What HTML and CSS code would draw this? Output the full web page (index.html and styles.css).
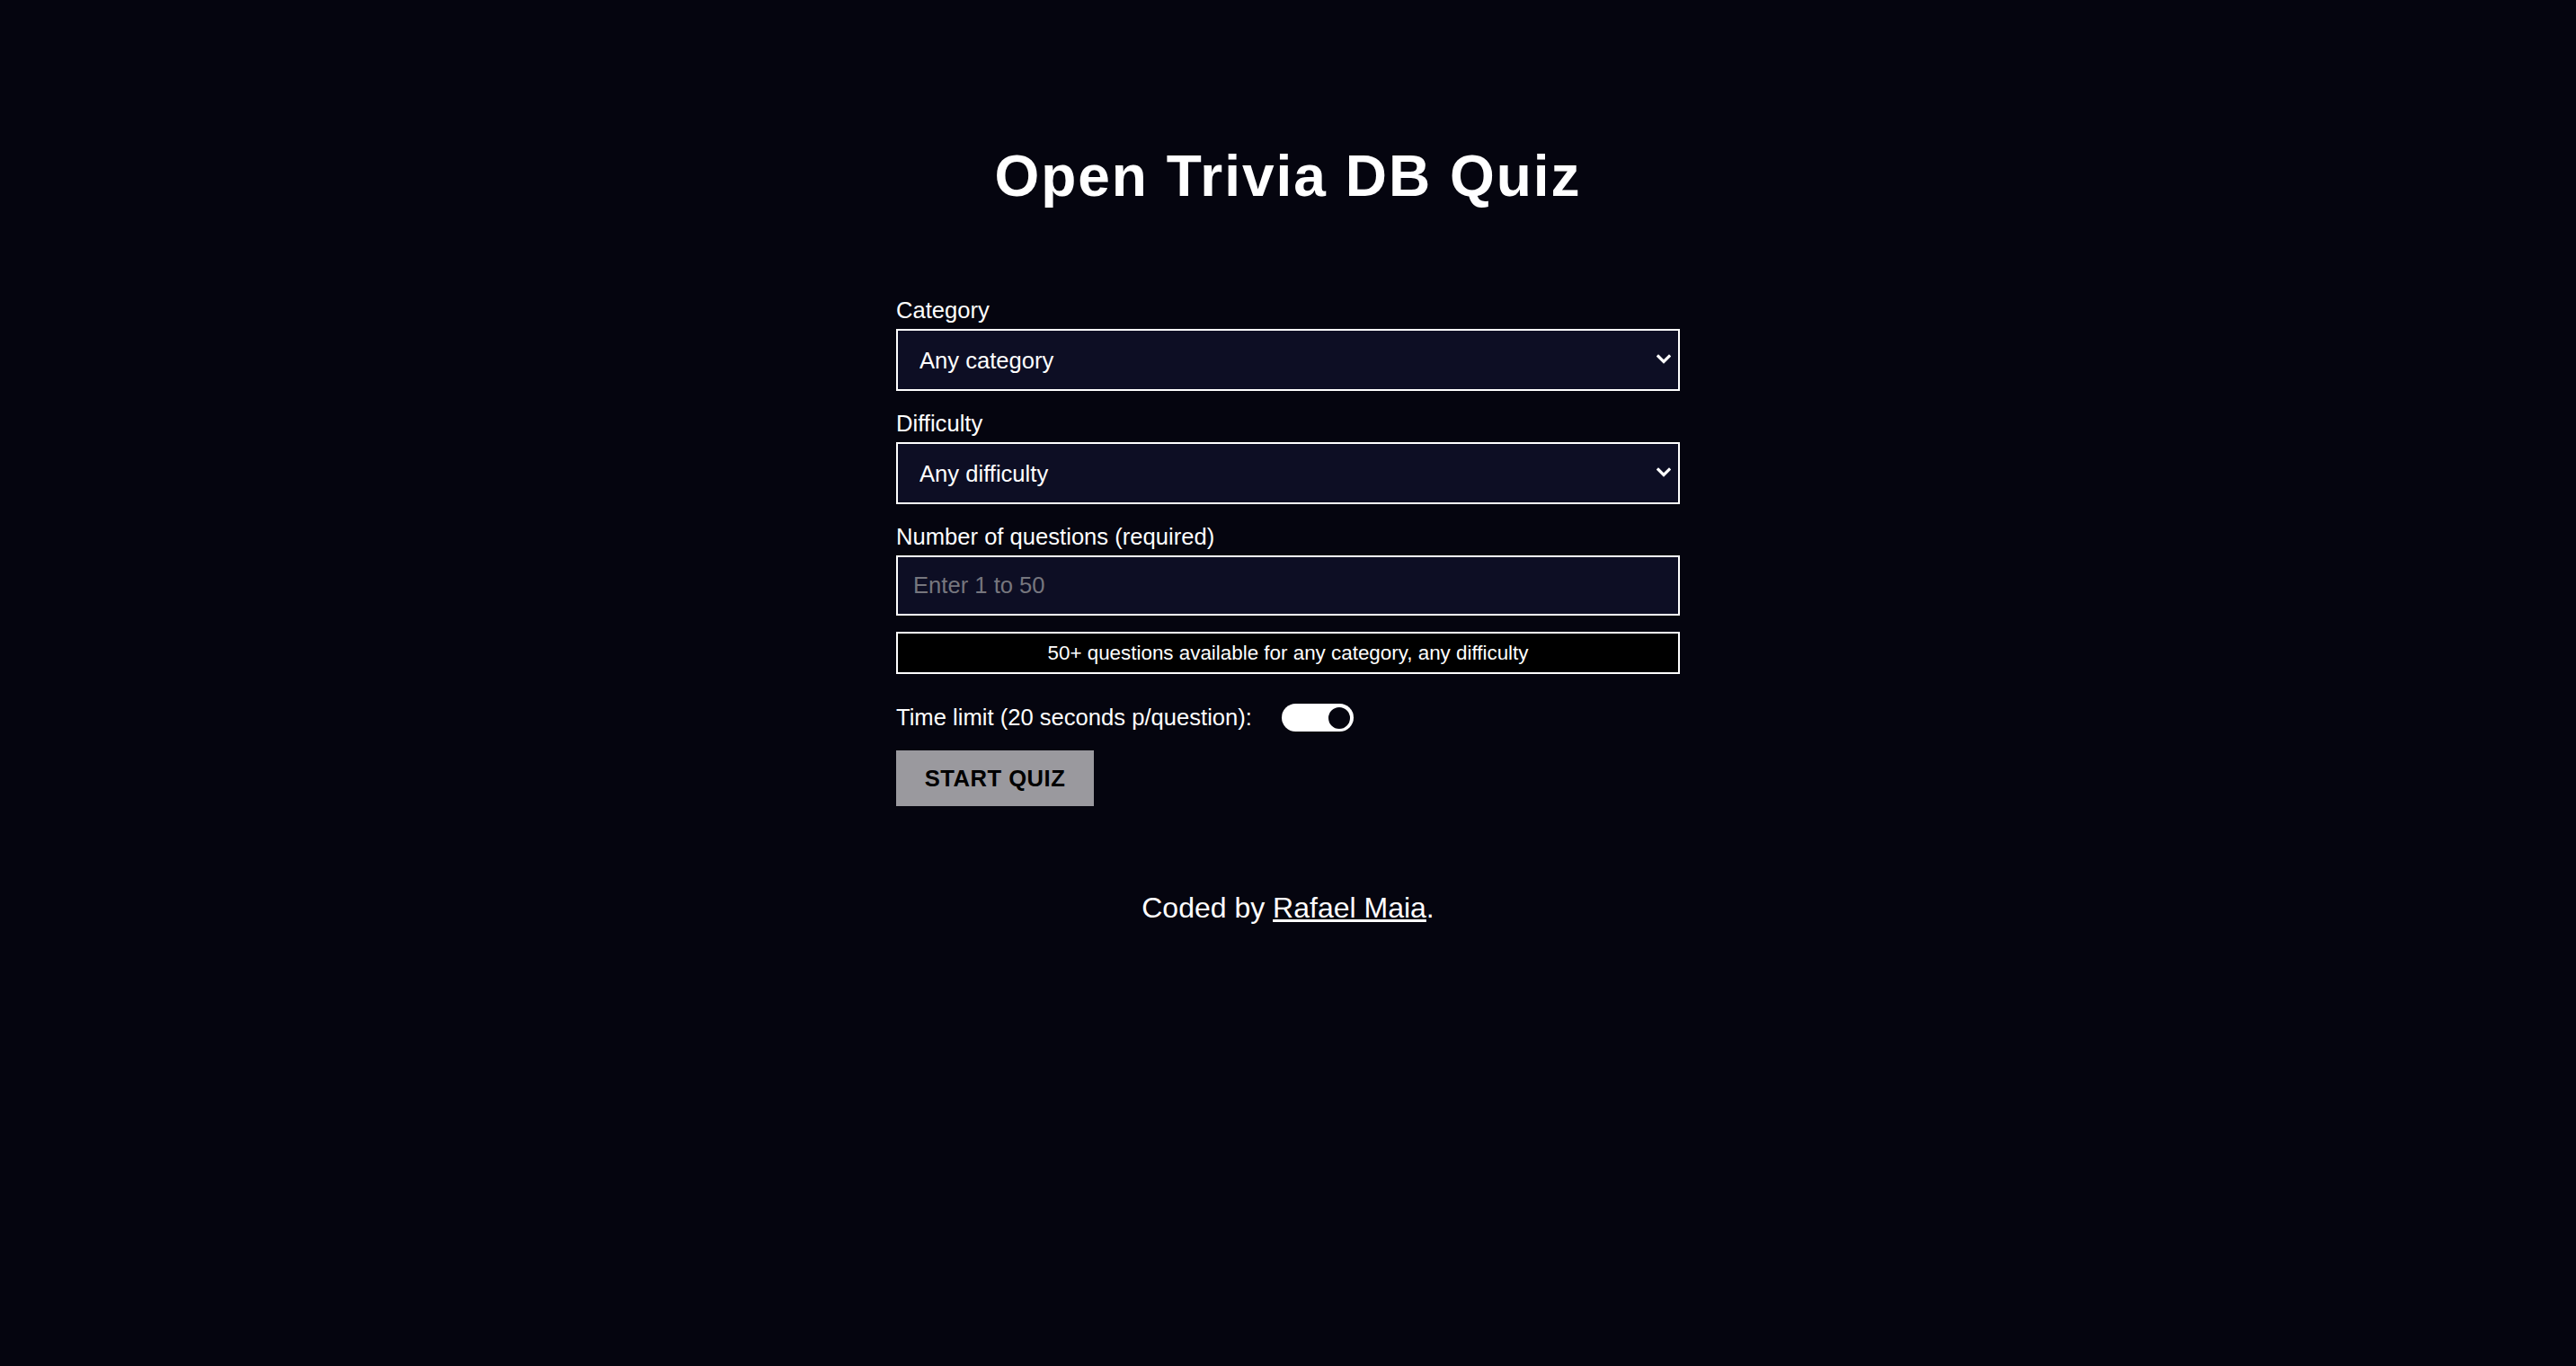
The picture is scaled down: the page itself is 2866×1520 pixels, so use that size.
FILE: index.html
```html
<!DOCTYPE html>
<html lang="en">
<head>
<meta charset="utf-8">
<title>Open Trivia DB Quiz</title>
<link rel="stylesheet" href="styles.css">
</head>
<body>
<main class="page">
  <h1 class="title">Open Trivia DB Quiz</h1>
  <form class="quiz-form">
    <label class="field-label" for="category">Category</label>
    <div class="select-wrap">
      <select id="category" class="field-select">
        <option>Any category</option>
      </select>
      <svg class="chevron" viewBox="0 0 16 12" width="16" height="12" aria-hidden="true"><path d="M2 2.5 L8 8.5 L14 2.5" fill="none" stroke="#ffffff" stroke-width="3.2" stroke-linecap="square"/></svg>
    </div>
    <label class="field-label" for="difficulty">Difficulty</label>
    <div class="select-wrap">
      <select id="difficulty" class="field-select">
        <option>Any difficulty</option>
      </select>
      <svg class="chevron" viewBox="0 0 16 12" width="16" height="12" aria-hidden="true"><path d="M2 2.5 L8 8.5 L14 2.5" fill="none" stroke="#ffffff" stroke-width="3.2" stroke-linecap="square"/></svg>
    </div>
    <label class="field-label" for="amount">Number of questions (required)</label>
    <input id="amount" class="field-input" type="text" placeholder="Enter 1 to 50">
    <div class="info-box">50+ questions available for any category, any difficulty</div>
    <div class="time-row">
      <span class="time-label">Time limit (20 seconds p/question):</span>
      <span class="toggle"><span class="knob"></span></span>
    </div>
    <button type="button" class="start-btn">START QUIZ</button>
  </form>
  <p class="footer">Coded by <a href="#" class="footer-link">Rafael Maia</a>.</p>
</main>
</body>
</html>
```

FILE: styles.css
```css
html, body {
  margin: 0;
  padding: 0;
}
body {
  background: #05050f;
  color: #ffffff;
  font-family: "Liberation Sans", Arial, sans-serif;
  min-height: 1520px;
}
.page {
  width: 872px;
  margin: 0 auto;
  padding-top: 159px;
}
.title {
  margin: 0;
  font-size: 64px;
  line-height: 74px;
  letter-spacing: 2px;
  font-weight: bold;
  text-align: center;
}
.quiz-form {
  margin-top: 98px;
  display: flex;
  flex-direction: column;
}
.field-label {
  display: block;
  font-size: 25.6px;
  line-height: 29px;
  margin-bottom: 6px;
}
.select-wrap {
  position: relative;
  margin-bottom: 22px;
}
.field-select {
  display: block;
  width: 100%;
  height: 69px;
  box-sizing: border-box;
  appearance: none;
  -webkit-appearance: none;
  border: 2px solid #ffffff;
  border-radius: 0;
  background: #0d0e24;
  color: #ffffff;
  font-family: "Liberation Sans", Arial, sans-serif;
  font-size: 25.6px;
  padding: 0 24px;
  outline: none;
}
.chevron {
  position: absolute;
  right: 10px;
  top: 28px;
  pointer-events: none;
}
.field-input {
  display: block;
  width: 100%;
  height: 67px;
  box-sizing: border-box;
  border: 2px solid #ffffff;
  border-radius: 0;
  background: #0d0e24;
  color: #ffffff;
  font-family: "Liberation Sans", Arial, sans-serif;
  font-size: 25.6px;
  padding: 0 17px;
  outline: none;
}
.field-input::placeholder {
  color: #76767e;
}
.info-box {
  margin-top: 18px;
  height: 47px;
  box-sizing: border-box;
  border: 2px solid #ffffff;
  background: #000000;
  font-size: 22.4px;
  display: flex;
  align-items: center;
  justify-content: center;
}
.time-row {
  display: flex;
  align-items: center;
  margin-top: 33px;
  height: 31px;
}
.time-label {
  font-size: 25.6px;
}
.toggle {
  margin-left: 33px;
  width: 80px;
  height: 31px;
  border-radius: 16px;
  background: #ffffff;
  display: flex;
  align-items: center;
  justify-content: flex-end;
  padding-right: 2px;
  box-sizing: border-box;
}
.knob {
  width: 24px;
  height: 24px;
  border-radius: 50%;
  background: #05050f;
  border: 2px solid #ffffff;
}
.start-btn {
  margin-top: 21px;
  width: 220px;
  height: 62px;
  border: none;
  border-radius: 0;
  background: #9a999e;
  color: #000000;
  font-family: "Liberation Sans", Arial, sans-serif;
  font-size: 25.6px;
  font-weight: bold;
  letter-spacing: 0.5px;
  padding: 0;
}
.footer {
  margin: 95px 0 0;
  text-align: center;
  font-size: 32px;
  line-height: 37px;
}
.footer-link {
  color: #ffffff;
  text-decoration: underline;
}
```
